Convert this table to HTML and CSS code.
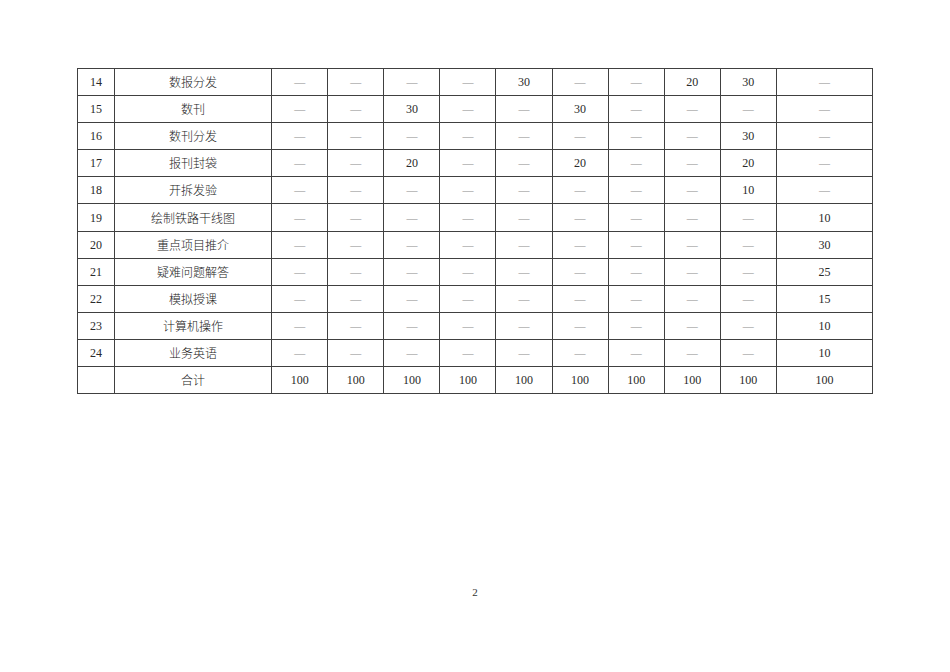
FILE: index.html
```html
<!DOCTYPE html>
<html lang="zh">
<head>
<meta charset="utf-8">
<title>表</title>
<link rel="stylesheet" href="styles.css">
</head>
<body>
<div class="page">
<table class="grid">
<colgroup>
<col class="c-no"><col class="c-name">
<col class="c-v"><col class="c-v"><col class="c-v"><col class="c-v"><col class="c-v">
<col class="c-v"><col class="c-v"><col class="c-v"><col class="c-v"><col class="c-last">
</colgroup>
<tbody>
<tr><td>14</td><td>数报分发</td><td class="d">—</td><td class="d">—</td><td class="d">—</td><td class="d">—</td><td>30</td><td class="d">—</td><td class="d">—</td><td>20</td><td>30</td><td class="d">—</td></tr>
<tr><td>15</td><td>数刊</td><td class="d">—</td><td class="d">—</td><td>30</td><td class="d">—</td><td class="d">—</td><td>30</td><td class="d">—</td><td class="d">—</td><td class="d">—</td><td class="d">—</td></tr>
<tr><td>16</td><td>数刊分发</td><td class="d">—</td><td class="d">—</td><td class="d">—</td><td class="d">—</td><td class="d">—</td><td class="d">—</td><td class="d">—</td><td class="d">—</td><td>30</td><td class="d">—</td></tr>
<tr><td>17</td><td>报刊封袋</td><td class="d">—</td><td class="d">—</td><td>20</td><td class="d">—</td><td class="d">—</td><td>20</td><td class="d">—</td><td class="d">—</td><td>20</td><td class="d">—</td></tr>
<tr><td>18</td><td>开拆发验</td><td class="d">—</td><td class="d">—</td><td class="d">—</td><td class="d">—</td><td class="d">—</td><td class="d">—</td><td class="d">—</td><td class="d">—</td><td>10</td><td class="d">—</td></tr>
<tr><td>19</td><td>绘制铁路干线图</td><td class="d">—</td><td class="d">—</td><td class="d">—</td><td class="d">—</td><td class="d">—</td><td class="d">—</td><td class="d">—</td><td class="d">—</td><td class="d">—</td><td>10</td></tr>
<tr><td>20</td><td>重点项目推介</td><td class="d">—</td><td class="d">—</td><td class="d">—</td><td class="d">—</td><td class="d">—</td><td class="d">—</td><td class="d">—</td><td class="d">—</td><td class="d">—</td><td>30</td></tr>
<tr><td>21</td><td>疑难问题解答</td><td class="d">—</td><td class="d">—</td><td class="d">—</td><td class="d">—</td><td class="d">—</td><td class="d">—</td><td class="d">—</td><td class="d">—</td><td class="d">—</td><td>25</td></tr>
<tr><td>22</td><td>模拟授课</td><td class="d">—</td><td class="d">—</td><td class="d">—</td><td class="d">—</td><td class="d">—</td><td class="d">—</td><td class="d">—</td><td class="d">—</td><td class="d">—</td><td>15</td></tr>
<tr><td>23</td><td>计算机操作</td><td class="d">—</td><td class="d">—</td><td class="d">—</td><td class="d">—</td><td class="d">—</td><td class="d">—</td><td class="d">—</td><td class="d">—</td><td class="d">—</td><td>10</td></tr>
<tr><td>24</td><td>业务英语</td><td class="d">—</td><td class="d">—</td><td class="d">—</td><td class="d">—</td><td class="d">—</td><td class="d">—</td><td class="d">—</td><td class="d">—</td><td class="d">—</td><td>10</td></tr>
<tr><td></td><td>合计</td><td>100</td><td>100</td><td>100</td><td>100</td><td>100</td><td>100</td><td>100</td><td>100</td><td>100</td><td>100</td></tr>
</tbody>
</table>
<div class="pageno">2</div>
</div>
</body>
</html>
```
FILE: styles.css
```css
html, body {
  margin: 0;
  padding: 0;
  background: #ffffff;
}
.page {
  width: 950px;
  height: 672px;
  padding-top: 68px;
  box-sizing: border-box;
}
.grid {
  margin-left: 77px;
  width: 796px;
  table-layout: fixed;
  border-collapse: collapse;
  font-family: "Liberation Serif", "Noto Sans CJK SC", serif;
  font-size: 12px;
  color: #2a2a2a;
}
.c-no { width: 37px; }
.c-name { width: 157px; }
.c-v { width: 56px; }
.c-last { width: 96px; }
.grid td {
  border: 1px solid #404040;
  height: 26.1px;
  padding: 0;
  text-align: center;
  vertical-align: middle;
  line-height: 14px;
}
.grid td:nth-child(2) {
  font-family: "Noto Sans CJK SC", sans-serif;
  font-weight: 300;
  color: #222222;
}
.grid td.d {
  color: #8a8a8a;
  font-size: 11px;
}
.pageno {
  margin-top: 192px;
  text-align: center;
  font-family: "Liberation Serif", serif;
  font-size: 11px;
  color: #333333;
}
```
